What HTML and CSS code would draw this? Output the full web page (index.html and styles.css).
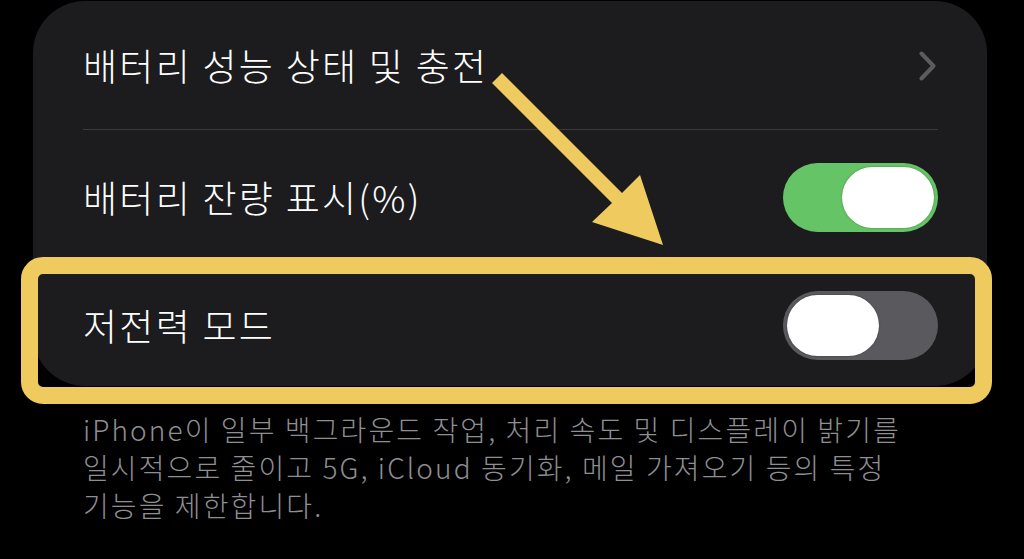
FILE: index.html
```html
<!DOCTYPE html>
<html>
    <head>
        <meta charset="utf-8"/>
        <link rel="stylesheet" href="styles.css">
    </head>

    <body>
        <div class="screen">
            <!-- settings group -->
            <div class="card">
                <div class="row">
                    <span class="label">배터리 성능 상태 및 충전</span>
                    <svg class="chevron" width="17" height="30" viewBox="0 0 17 30">
                        <polyline points="2.5,2.5 14.5,15 2.5,27.5" fill="none" stroke="#5b5b60" stroke-width="4" stroke-linecap="round" stroke-linejoin="round"/>
                    </svg>
                </div>
                <div class="row row-mid">
                    <span class="label">배터리 잔량 표시(%)</span>
                    <div class="switch switch-on"><div class="knob"></div></div>
                </div>
                <div class="row row-last">
                    <span class="label">저전력 모드</span>
                    <div class="switch"><div class="knob"></div></div>
                </div>
            </div>

            <p class="footnote">
                iPhone이 일부 백그라운드 작업, 처리 속도 및 디스플레이 밝기를<br>
                일시적으로 줄이고 5G, iCloud 동기화, 메일 가져오기 등의 특정<br>
                기능을 제한합니다.
            </p>

            <!-- annotation drawn over the screenshot -->
            <div class="highlight"></div>
            <svg class="arrow" width="1024" height="559" viewBox="0 0 1024 559">
                <polygon points="492,83 502,73 622,193 640,175 663,245 592,222 612,203" fill="#efca5e"/>
            </svg>
        </div>
    </body>
</html>
```

FILE: styles.css
```css
/* whole page is the dark settings screen */
body {
    margin: 0;
    background-color: #000000;
    font-family: "Noto Sans", "Noto Sans CJK KR", sans-serif;
    color: #ffffff;
}

.screen {
    position: relative;
    width: 1024px;
    height: 559px;
    overflow: hidden;
}

/* grouped list */
.card {
    margin: 1px 0 0 33px;
    width: 954px;
    box-sizing: border-box;
    padding: 0 49px 0 50px;
    background-color: #1c1c1e;
    border-radius: 52px;
}

.row {
    display: flex;
    align-items: center;
    justify-content: space-between;
    height: 128px;
    border-bottom: 1px solid #3a3a3c;
}

.row-mid {
    height: 134px;
}

.row-last {
    height: 121px;
    border-bottom: none;
}

.label {
    font-family: "Noto Sans CJK KR", sans-serif;
    font-size: 37px;
    font-weight: 300;
    letter-spacing: 2.3px;
    line-height: 1;
}

.chevron {
    margin-right: 2px;
    margin-top: 2px;
}

/* toggle switch */
.switch {
    width: 155px;
    height: 69px;
    box-sizing: border-box;
    padding: 4px;
    border-radius: 35px;
    background-color: #5a5a5e;
    display: flex;
    justify-content: flex-start;
}

.switch-on {
    background-color: #65c466;
    justify-content: flex-end;
}

.knob {
    width: 92px;
    height: 61px;
    border-radius: 31px;
    background-color: #ffffff;
    box-shadow: 0 0 2px rgba(0, 0, 0, 0.35);
}

/* gray caption under the group */
.footnote {
    margin: 24px 0 0 83px;
    font-family: "Noto Sans CJK KR", sans-serif;
    font-size: 28px;
    font-weight: 300;
    letter-spacing: 2.1px;
    line-height: 38px;
    color: #8e8e93;
}

/* yellow box and arrow */
.highlight {
    position: absolute;
    left: 21px;
    top: 257px;
    width: 971px;
    height: 147px;
    box-sizing: border-box;
    border: 17px solid #efca5e;
    border-radius: 22px;
}

.arrow {
    position: absolute;
    left: 0;
    top: 0;
}
```
